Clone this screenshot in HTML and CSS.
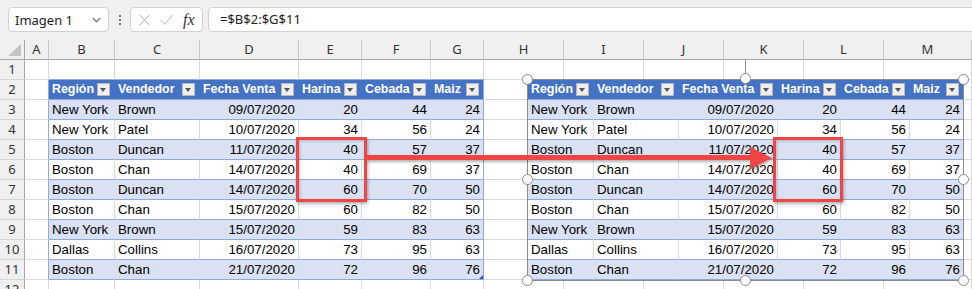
FILE: index.html
```html
<!DOCTYPE html>
<html lang="es">
<head>
    <meta charset="UTF-8">
    <title>Libro1 - Excel</title>
    <link rel="stylesheet" href="styles.css">
</head>
<body>
<div class="sheet">

    <!-- Formula bar -->
    <div class="toolbar">
        <div class="namebox">
            <span>Imagen 1</span>
            <svg class="chev" viewBox="0 0 10 6" fill="none" stroke="#555" stroke-width="1.2"><path d="M1 1l4 4 4-4"/></svg>
        </div>
        <div class="grip"><i></i><i></i><i></i></div>
        <div class="fxbox">
            <svg class="tool" viewBox="0 0 14 14" fill="none" stroke="#c4c4c4" stroke-width="1.2"><path d="M1 1l12 12M13 1L1 13"/></svg>
            <svg class="tool" viewBox="0 0 16 14" fill="none" stroke="#c4c4c4" stroke-width="1.2"><path d="M1 7l5 5L15 1"/></svg>
            <span class="fx">fx</span>
        </div>
        <div class="formula">=$B$2:$G$11</div>
    </div>

    <!-- Grid -->
    <div class="grid">
        <div class="row colhead">
            <div class="corner"><svg viewBox="0 0 13 12"><polygon points="13,0 13,12 0,12" fill="#c3c3c3"/></svg></div>
            <div>A</div><div>B</div><div>C</div><div>D</div><div>E</div><div>F</div><div>G</div>
            <div>H</div><div>I</div><div>J</div><div>K</div><div>L</div><div>M</div><div></div>
        </div>
        <div class="row">
            <div class="rh">1</div>
            <div></div><div class="top"></div><div class="top"></div><div class="top"></div><div class="top"></div><div class="top"></div><div class="top"></div>
            <div></div><div></div><div></div><div></div><div></div><div></div><div></div>
        </div>
        <div class="row">
            <div class="rh">2</div>
            <div class="edge"></div>
            <div class="th"><span>Región</span><b class="flt"></b></div>
            <div class="th"><span>Vendedor</span><b class="flt"></b></div>
            <div class="th"><span>Fecha Venta</span><b class="flt"></b></div>
            <div class="th"><span>Harina</span><b class="flt"></b></div>
            <div class="th"><span>Cebada</span><b class="flt"></b></div>
            <div class="th last"><span>Maiz</span><b class="flt"></b></div>
            <div></div><div></div><div></div><div></div><div></div><div></div><div></div>
        </div>
        <div class="row">
            <div class="rh">3</div>
            <div class="edge"></div>
            <div class="band">New York</div><div class="band">Brown</div><div class="band num">09/07/2020</div>
            <div class="band num">20</div><div class="band num">44</div><div class="band num last">24</div>
            <div></div><div></div><div></div><div></div><div></div><div></div><div></div>
        </div>
        <div class="row">
            <div class="rh">4</div>
            <div class="edge"></div>
            <div class="plain">New York</div><div class="plain">Patel</div><div class="plain num">10/07/2020</div>
            <div class="plain num">34</div><div class="plain num">56</div><div class="plain num last">24</div>
            <div></div><div></div><div></div><div></div><div></div><div></div><div></div>
        </div>
        <div class="row">
            <div class="rh">5</div>
            <div class="edge"></div>
            <div class="band">Boston</div><div class="band">Duncan</div><div class="band num">11/07/2020</div>
            <div class="band num">40</div><div class="band num">57</div><div class="band num last">37</div>
            <div></div><div></div><div></div><div></div><div></div><div></div><div></div>
        </div>
        <div class="row">
            <div class="rh">6</div>
            <div class="edge"></div>
            <div class="plain">Boston</div><div class="plain">Chan</div><div class="plain num">14/07/2020</div>
            <div class="plain num">40</div><div class="plain num">69</div><div class="plain num last">37</div>
            <div></div><div></div><div></div><div></div><div></div><div></div><div></div>
        </div>
        <div class="row">
            <div class="rh">7</div>
            <div class="edge"></div>
            <div class="band">Boston</div><div class="band">Duncan</div><div class="band num">14/07/2020</div>
            <div class="band num">60</div><div class="band num">70</div><div class="band num last">50</div>
            <div></div><div></div><div></div><div></div><div></div><div></div><div></div>
        </div>
        <div class="row">
            <div class="rh">8</div>
            <div class="edge"></div>
            <div class="plain">Boston</div><div class="plain">Chan</div><div class="plain num">15/07/2020</div>
            <div class="plain num">60</div><div class="plain num">82</div><div class="plain num last">50</div>
            <div></div><div></div><div></div><div></div><div></div><div></div><div></div>
        </div>
        <div class="row">
            <div class="rh">9</div>
            <div class="edge"></div>
            <div class="band">New York</div><div class="band">Brown</div><div class="band num">15/07/2020</div>
            <div class="band num">59</div><div class="band num">83</div><div class="band num last">63</div>
            <div></div><div></div><div></div><div></div><div></div><div></div><div></div>
        </div>
        <div class="row">
            <div class="rh">10</div>
            <div class="edge"></div>
            <div class="plain">Dallas</div><div class="plain">Collins</div><div class="plain num">16/07/2020</div>
            <div class="plain num">73</div><div class="plain num">95</div><div class="plain num last">63</div>
            <div></div><div></div><div></div><div></div><div></div><div></div><div></div>
        </div>
        <div class="row">
            <div class="rh">11</div>
            <div class="edge"></div>
            <div class="band">Boston</div><div class="band">Chan</div><div class="band num">21/07/2020</div>
            <div class="band num">72</div><div class="band num">96</div><div class="band num last">76<i class="resize"></i></div>
            <div></div><div></div><div></div><div></div><div></div><div></div><div></div>
        </div>
        <div class="row">
            <div class="rh">12</div>
            <div></div><div></div><div></div><div></div><div></div><div></div><div></div>
            <div></div><div></div><div></div><div></div><div></div><div></div><div></div>
        </div>
    </div>

    <!-- Linked picture of the table -->
    <div class="picture">
        <div class="prow">
            <div class="th"><span>Región</span><b class="flt"></b></div>
            <div class="th"><span>Vendedor</span><b class="flt"></b></div>
            <div class="th"><span>Fecha Venta</span><b class="flt"></b></div>
            <div class="th"><span>Harina</span><b class="flt"></b></div>
            <div class="th"><span>Cebada</span><b class="flt"></b></div>
            <div class="th last"><span>Maiz</span><b class="flt"></b></div>
        </div>
        <div class="prow">
            <div class="band">New York</div><div class="band">Brown</div><div class="band num">09/07/2020</div>
            <div class="band num">20</div><div class="band num">44</div><div class="band num last">24</div>
        </div>
        <div class="prow">
            <div class="plain">New York</div><div class="plain">Patel</div><div class="plain num">10/07/2020</div>
            <div class="plain num">34</div><div class="plain num">56</div><div class="plain num last">24</div>
        </div>
        <div class="prow">
            <div class="band">Boston</div><div class="band">Duncan</div><div class="band num">11/07/2020</div>
            <div class="band num">40</div><div class="band num">57</div><div class="band num last">37</div>
        </div>
        <div class="prow">
            <div class="plain">Boston</div><div class="plain">Chan</div><div class="plain num">14/07/2020</div>
            <div class="plain num">40</div><div class="plain num">69</div><div class="plain num last">37</div>
        </div>
        <div class="prow">
            <div class="band">Boston</div><div class="band">Duncan</div><div class="band num">14/07/2020</div>
            <div class="band num">60</div><div class="band num">70</div><div class="band num last">50</div>
        </div>
        <div class="prow">
            <div class="plain">Boston</div><div class="plain">Chan</div><div class="plain num">15/07/2020</div>
            <div class="plain num">60</div><div class="plain num">82</div><div class="plain num last">50</div>
        </div>
        <div class="prow">
            <div class="band">New York</div><div class="band">Brown</div><div class="band num">15/07/2020</div>
            <div class="band num">59</div><div class="band num">83</div><div class="band num last">63</div>
        </div>
        <div class="prow">
            <div class="plain">Dallas</div><div class="plain">Collins</div><div class="plain num">16/07/2020</div>
            <div class="plain num">73</div><div class="plain num">95</div><div class="plain num last">63</div>
        </div>
        <div class="prow">
            <div class="band">Boston</div><div class="band">Chan</div><div class="band num">21/07/2020</div>
            <div class="band num">72</div><div class="band num">96</div><div class="band num last">76</div>
        </div>
    </div>

    <!-- Selection handles -->
    <div class="stem"></div>
    <div class="handle h-tl"></div>
    <div class="handle h-tm"></div>
    <div class="handle h-tr"></div>
    <div class="handle h-ml"></div>
    <div class="handle h-mr"></div>
    <div class="handle h-bl"></div>
    <div class="handle h-bm"></div>
    <div class="handle h-br"></div>

    <!-- Callouts -->
    <div class="mark mark-left"></div>
    <div class="mark mark-right"></div>
    <svg class="arrow" viewBox="0 0 410 28" width="410" height="28">
        <rect x="0" y="11" width="388" height="5" fill="#f04545"/>
        <polygon points="384,3 406,14 384,25" fill="#f04545"/>
    </svg>

</div>
</body>
</html>
```

FILE: styles.css
```css
* {
    margin: 0;
    padding: 0;
    box-sizing: border-box;
}

html, body {
    width: 972px;
    height: 289px;
    overflow: hidden;
    background: #fff;
}

body {
    font-family: "Liberation Sans", Arial, sans-serif;
    font-size: 13.3px;
    color: #000;
}

.sheet {
    position: relative;
    height: 289px;
    overflow: hidden;
}

/* Formula bar */
.toolbar {
    display: flex;
    align-items: flex-start;
    height: 40px;
    padding-top: 7px;
    background: #f0f0f0;
    font-family: "Noto Sans", sans-serif;
    font-size: 13px;
    color: #222;
}

.namebox {
    width: 101px;
    height: 25px;
    margin-left: 8px;
    display: flex;
    align-items: center;
    justify-content: space-between;
    padding: 0 7px 0 6px;
    background: #fff;
    border: 1px solid #d2d2d2;
    border-radius: 4px;
}

.chev {
    width: 9px;
    height: 6px;
}

.grip {
    width: 21px;
    height: 25px;
    display: flex;
    flex-direction: column;
    align-items: center;
    justify-content: center;
    gap: 2px;
}

.grip i {
    width: 2px;
    height: 2px;
    background: #777;
}

.fxbox {
    width: 73px;
    height: 25px;
    display: flex;
    align-items: center;
    padding-left: 7px;
    gap: 8px;
    background: #fff;
    border: 1px solid #d2d2d2;
    border-radius: 4px;
}

.tool {
    width: 13px;
    height: 12px;
}

.tool + .tool {
    width: 15px;
}

.fx {
    font-family: "Liberation Serif", serif;
    font-style: italic;
    font-size: 16px;
    color: #333;
    margin-left: 1px;
}

.formula {
    flex: 1;
    height: 25px;
    margin-left: 5px;
    margin-right: -6px;
    padding-left: 11px;
    line-height: 23px;
    background: #fff;
    border: 1px solid #d2d2d2;
    border-radius: 4px;
}

/* Grid */
.row {
    display: grid;
    grid-template-columns: 25px 24px 66px 85px 99px 63px 69px 53px 80px 80px 80px 80px 80px 1fr;
    height: 20px;
}

.row > div,
.prow > div {
    height: 20px;
    padding: 0 3px;
    line-height: 19px;
    white-space: nowrap;
    overflow: hidden;
    border-right: 1px solid #dadada;
    border-bottom: 1px solid #dadada;
}

.colhead > div {
    background: #f0f0f0;
    border-right-color: #c8c8c8;
    border-bottom-color: #a8a8a8;
    text-align: center;
    font-family: "Noto Sans", sans-serif;
    font-size: 13px;
    color: #333;
}

.row > .corner {
    position: relative;
    border-right-color: #a8a8a8;
}

.corner svg {
    position: absolute;
    right: 3px;
    bottom: 3px;
    width: 13px;
    height: 12px;
}

.row > .rh {
    background: #f0f0f0;
    border-right-color: #a8a8a8;
    border-bottom-color: #d4d4d4;
    text-align: center;
    padding: 0;
    font-family: "Noto Sans", sans-serif;
    font-size: 13px;
    color: #333;
}

/* Table */
.row > .top {
    border-bottom-color: #8ea9db;
}

.row > .edge {
    border-right-color: #8ea9db;
}

.row > .th,
.prow > .th {
    display: flex;
    align-items: center;
    justify-content: space-between;
    padding: 0 4px 0 3px;
    background: #4472c4;
    color: #fff;
    font-weight: bold;
    font-size: 12.4px;
    border-right-color: #4472c4;
    border-bottom-color: #8ea9db;
}

.flt {
    position: relative;
    flex: none;
    width: 13px;
    height: 13px;
    background: #efefef;
    border: 1px solid #b8b8b8;
}

.flt::after {
    content: "";
    position: absolute;
    left: 2px;
    top: 4px;
    border-left: 3.5px solid transparent;
    border-right: 3.5px solid transparent;
    border-top: 4px solid #555;
}

.row > .band,
.prow > .band {
    background: #d9e1f2;
    border-right-color: #d9e1f2;
    border-bottom-color: #8ea9db;
}

.row > .plain,
.prow > .plain {
    border-bottom-color: #8ea9db;
}

.num {
    text-align: right;
}

.row > .last {
    position: relative;
    border-right-color: #8ea9db;
}

.prow > .last {
    border-right: none;
}

.resize {
    position: absolute;
    right: 0;
    bottom: 0;
    width: 0;
    height: 0;
    border-left: 4px solid transparent;
    border-bottom: 4px solid #2f5597;
}

/* Picture */
.picture {
    position: absolute;
    left: 527px;
    top: 79px;
    width: 437px;
    height: 202px;
    background: #fff;
    border: 1px solid #8c8c8c;
}

.prow {
    display: grid;
    grid-template-columns: 66px 85px 99px 63px 69px 53px;
    height: 20px;
}

.stem {
    position: absolute;
    left: 745px;
    top: 60px;
    width: 1px;
    height: 14px;
    background: #8c8c8c;
}

.handle {
    position: absolute;
    width: 11px;
    height: 11px;
    margin: -5px 0 0 -5px;
    border-radius: 50%;
    background: #fff;
    border: 1.5px solid #8c8c8c;
}

.h-tl { left: 527px; top: 79px; }
.h-tm { left: 745px; top: 78px; }
.h-tr { left: 963px; top: 79px; }
.h-ml { left: 527px; top: 179px; }
.h-mr { left: 963px; top: 179px; }
.h-bl { left: 527px; top: 280px; }
.h-bm { left: 745px; top: 280px; }
.h-br { left: 963px; top: 280px; }

/* Red callouts */
.mark {
    position: absolute;
    top: 137px;
    height: 65px;
    border: 3px solid #f04545;
    box-shadow: 1px 2px 3px rgba(0, 0, 0, 0.3), inset 1px 1px 3px rgba(0, 0, 0, 0.2);
}

.mark-left {
    left: 296px;
    width: 71px;
}

.mark-right {
    left: 773px;
    width: 70px;
}

.arrow {
    position: absolute;
    left: 366px;
    top: 144px;
    filter: drop-shadow(1px 2px 1.5px rgba(0, 0, 0, 0.3));
}
```
